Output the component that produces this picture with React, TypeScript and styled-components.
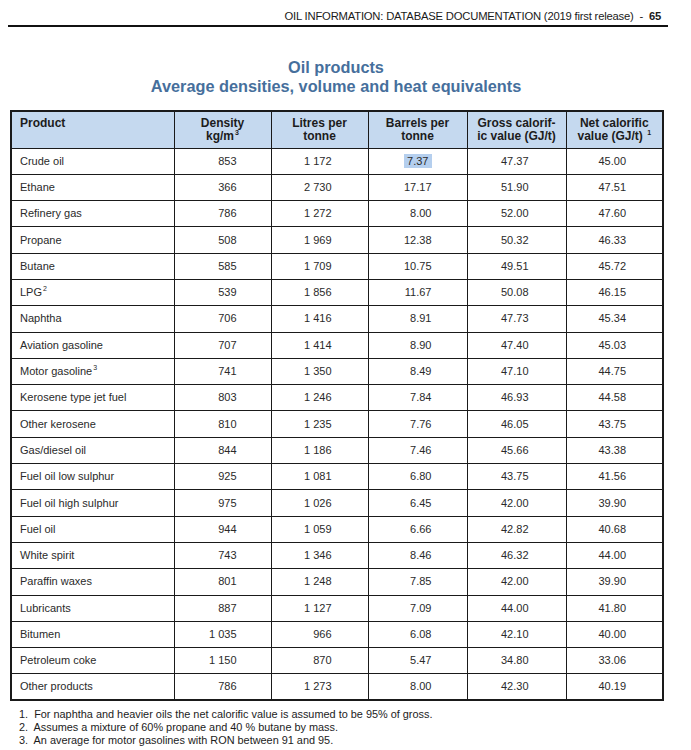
import React from "react";
import styled, { createGlobalStyle } from "styled-components";

const Global = createGlobalStyle`
  html, body { margin: 0; padding: 0; background: #fff; }
  body { font-family: "Liberation Sans", Arial, sans-serif; color: #222; }
`;

const Page = styled.div`
  width: 691px;
  height: 750px;
  background: #fff;
  overflow: hidden;
`;

const RunningHead = styled.header`
  margin: 0 23px 0 8px;
  padding: 10px 7px 3px 0;
  border-bottom: 2px solid #111;
  text-align: right;
  font-size: 11.25px;
  line-height: 12px;
  color: #1a1a1a;
  letter-spacing: -0.2px;
`;

const PageNo = styled.b`
  font-weight: 700;
`;

const Title = styled.h1`
  margin: 31px 0 0 10px;
  width: 652px;
  text-align: center;
  font-size: 16.3px;
  line-height: 19px;
  font-weight: 700;
  color: #466f9c;
`;

const Table = styled.table`
  margin: 14px 0 0 10px;
  width: 652px;
  border-collapse: collapse;
  table-layout: fixed;
  border: 2px solid #1a1a1a;
`;

const HeadRow = styled.tr`
  height: 37px;
`;

const HeadCell = styled.th<{ $left?: boolean }>`
  padding: ${(p) => (p.$left ? "5px 0 0 8px" : "0")};
  vertical-align: ${(p) => (p.$left ? "top" : "middle")};
  background: #c5d9ef;
  border: 1px solid #1a1a1a;
  font-size: 12px;
  line-height: 13px;
  font-weight: 700;
  color: #1c1c1c;
  text-align: ${(p) => (p.$left ? "left" : "center")};
`;

const Row = styled.tr`
  height: 26.3px;
`;

const NameCell = styled.td`
  padding: 0 0 0 8px;
  border: 1px solid #1a1a1a;
  font-size: 11px;
  line-height: 13px;
  color: #2a2a2a;
  white-space: nowrap;
`;

const NumCell = styled.td<{ $pad: number }>`
  padding: 0 ${(p) => p.$pad}px 0 0;
  border: 1px solid #1a1a1a;
  font-size: 11px;
  line-height: 13px;
  color: #2a2a2a;
  text-align: right;
  white-space: nowrap;
`;

const Marked = styled.span`
  background: #b5cfee;
  padding: 1px 3px;
`;

const Sup = styled.span`
  font-size: 7px;
  line-height: 0;
  vertical-align: baseline;
  position: relative;
  top: -5px;
  margin-left: 1px;
`;

const Notes = styled.ol`
  margin: 7px 0 0 0;
  padding: 0 0 0 19px;
  list-style: none;
  font-size: 10.9px;
  line-height: 13px;
  color: #1c1c1c;
  letter-spacing: 0;
`;

type R = [string, string, string, string, string, string, string?];

const rows: R[] = [
  ["Crude oil", "853", "1 172", "7.37", "47.37", "45.00"],
  ["Ethane", "366", "2 730", "17.17", "51.90", "47.51"],
  ["Refinery gas", "786", "1 272", "8.00", "52.00", "47.60"],
  ["Propane", "508", "1 969", "12.38", "50.32", "46.33"],
  ["Butane", "585", "1 709", "10.75", "49.51", "45.72"],
  ["LPG", "539", "1 856", "11.67", "50.08", "46.15", "2"],
  ["Naphtha", "706", "1 416", "8.91", "47.73", "45.34"],
  ["Aviation gasoline", "707", "1 414", "8.90", "47.40", "45.03"],
  ["Motor gasoline", "741", "1 350", "8.49", "47.10", "44.75", "3"],
  ["Kerosene type jet fuel", "803", "1 246", "7.84", "46.93", "44.58"],
  ["Other kerosene", "810", "1 235", "7.76", "46.05", "43.75"],
  ["Gas/diesel oil", "844", "1 186", "7.46", "45.66", "43.38"],
  ["Fuel oil low sulphur", "925", "1 081", "6.80", "43.75", "41.56"],
  ["Fuel oil high sulphur", "975", "1 026", "6.45", "42.00", "39.90"],
  ["Fuel oil", "944", "1 059", "6.66", "42.82", "40.68"],
  ["White spirit", "743", "1 346", "8.46", "46.32", "44.00"],
  ["Paraffin waxes", "801", "1 248", "7.85", "42.00", "39.90"],
  ["Lubricants", "887", "1 127", "7.09", "44.00", "41.80"],
  ["Bitumen", "1 035", "966", "6.08", "42.10", "40.00"],
  ["Petroleum coke", "1 150", "870", "5.47", "34.80", "33.06"],
  ["Other products", "786", "1 273", "8.00", "42.30", "40.19"],
];

const pads = [34, 36, 35, 37, 36];
const widths = [163, 97, 97, 99, 99, 97];

export default function App() {
  return (
    <Page>
      <Global />
      <RunningHead>
        OIL INFORMATION: DATABASE DOCUMENTATION (2019 first release)&nbsp; - &nbsp;<PageNo>65</PageNo>
      </RunningHead>
      <Title>
        Oil products
        <br />
        Average densities, volume and heat equivalents
      </Title>
      <Table>
        <colgroup>
          {widths.map((w, i) => (
            <col key={i} style={{ width: w }} />
          ))}
        </colgroup>
        <thead>
          <HeadRow>
            <HeadCell $left>Product</HeadCell>
            <HeadCell>
              Density
              <br />
              kg/m<Sup>3</Sup>
            </HeadCell>
            <HeadCell>
              Litres per
              <br />
              tonne
            </HeadCell>
            <HeadCell>
              Barrels per
              <br />
              tonne
            </HeadCell>
            <HeadCell>
              Gross calorif-
              <br />
              ic value (GJ/t)
            </HeadCell>
            <HeadCell>
              Net calorific
              <br />
              value (GJ/t) <Sup>1</Sup>
            </HeadCell>
          </HeadRow>
        </thead>
        <tbody>
          {rows.map((r, i) => (
            <Row key={r[0]}>
              <NameCell>
                {r[0]}
                {r[6] && <Sup>{r[6]}</Sup>}
              </NameCell>
              {r.slice(1, 6).map((v, j) => (
                <NumCell key={j} $pad={pads[j]}>
                  {i === 0 && j === 2 ? <Marked>{v}</Marked> : v}
                </NumCell>
              ))}
            </Row>
          ))}
        </tbody>
      </Table>
      <Notes>
        <li>1.&nbsp; For naphtha and heavier oils the net calorific value is assumed to be 95% of gross.</li>
        <li>2.&nbsp; Assumes a mixture of 60% propane and 40 % butane by mass.</li>
        <li>3.&nbsp; An average for motor gasolines with RON between 91 and 95.</li>
      </Notes>
    </Page>
  );
}
